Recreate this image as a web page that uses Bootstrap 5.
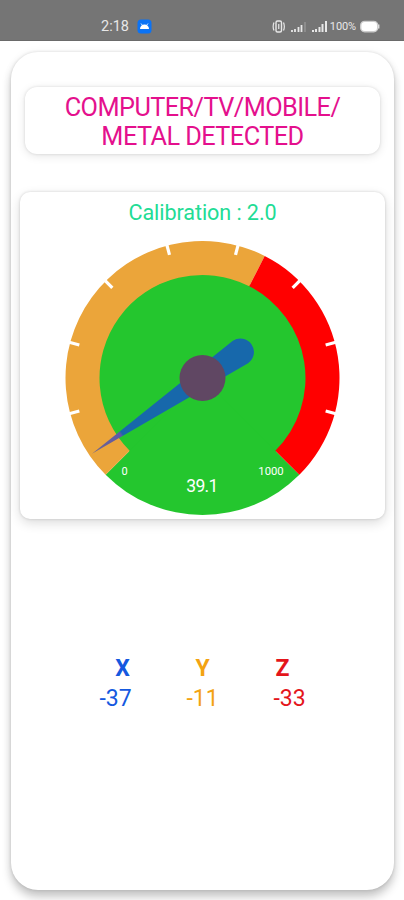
<!DOCTYPE html>
<html lang="en">
<head>
<meta charset="utf-8">
<meta name="viewport" content="width=device-width, initial-scale=1">
<title>Metal Detector</title>
<link href="https://cdn.jsdelivr.net/npm/bootstrap@5.3.0/dist/css/bootstrap.min.css" rel="stylesheet">
<style>
body{font-family:Roboto,"Liberation Sans",sans-serif;background:#fff;height:900px;overflow:hidden}
.status{height:41px;background:#757575;color:#e8e8e8;padding:12px 24px 0 101px;border-bottom:1px solid #6a6a6a}
.clock{font-size:14.5px;line-height:29px}
.pct{font-size:11px;line-height:29px;letter-spacing:-.1px}
.panel{height:838px;margin:11px 10px 0 11px;padding:35px 9px 0;border-radius:27px;box-shadow:0 0 3px rgba(0,0,0,.12),0 0 10px rgba(0,0,0,.05),0 7px 10px rgba(0,0,0,.22)}
.alert-box{height:67px;margin:0 5px;padding-top:2px;border-radius:12px;box-shadow:0 0 3px rgba(0,0,0,.12),0 2px 10px rgba(0,0,0,.1);color:#e4108d;font-size:25.3px;line-height:29px;letter-spacing:-.56px}
.gauge-box{height:327px;margin-top:38px;border-radius:10px;box-shadow:0 0 3px rgba(0,0,0,.16),0 4px 12px rgba(0,0,0,.14);color:#22dc95}
.calib{font-size:21.6px;line-height:26px;padding-top:8px;letter-spacing:-.08px}
.axes{margin-top:135px;font-size:23px;line-height:30px}
.axis{width:80px}
.vals .axis{width:87px}
.ax-x{color:#1559df}.ax-y{color:#f3a313}.ax-z{color:#e4151b}
</style>
</head>
<body>
<header class="status d-flex align-items-start">
  <span class="clock">2:18</span>
  <svg class="ms-2" width="15" height="29" viewBox="0 0 15 29"><rect x=".5" y="7.500" width="14" height="14" rx="3.500" fill="#0b73f5"/><path d="M3 17a4.500 4.500 0 0 1 9 0z" fill="#fff"/><path d="M4 11.500l1.500 2M11 11.500l-1.500 2" stroke="#fff" stroke-width=".8"/></svg>
  <div class="ms-auto d-flex">
    <svg width="58" height="29" viewBox="0 0 58 29" fill="none" stroke="#e8e8e8"><rect x="4" y="9" width="5.500" height="11" rx="1.500" stroke-width="1.400"/><path d="M2 10.500Q.3 14.500 2 18.500M11.500 10.500q1.700 4 0 8M6.750 12v5" stroke-width="1.200"/><path d="M20 20v-2M23 20v-3M26.500 20v-5M29.500 20v-7" stroke-width="1.800"/><path d="M33 20V10" stroke="#999" stroke-width="1.300"/><path d="M41 20v-2M44 20v-3M47.500 20v-5M50.500 20v-8M54 20V9" stroke-width="2"/></svg>
    <span class="pct">100%</span>
    <svg class="ms-1" width="20" height="29" viewBox="0 0 20 29"><rect x=".7" y="9.400" width="17" height="10.400" rx="4" fill="#fff" stroke="#ccc" stroke-width="1.400"/><path d="M18.700 12.500v4" stroke="#ddd" stroke-width="1.500"/></svg>
  </div>
</header>
<main class="panel bg-white">
  <section class="alert-box bg-white d-flex align-items-center justify-content-center text-center"><div>COMPUTER/TV/MOBILE/<br>METAL DETECTED</div></section>
  <section class="gauge-box bg-white text-center">
    <div class="calib">Calibration : 2.0</div>
    <svg class="d-block" width="365" height="290" viewBox="20 226 365 290">
      <defs><linearGradient id="needle" gradientUnits="userSpaceOnUse" x1="134" y1="0" x2="95" y2="0"><stop offset="0" stop-color="#756887"/><stop offset=".88" stop-color="#5c58aa"/><stop offset=".94" stop-color="#1768ab"/></linearGradient></defs>
      <g transform="translate(202.500 378)">
        <circle r="104" fill="#24c62e"/>
        <path d="M0 0L-96.870 96.870A137 137 0 0 0 96.870 96.870z" fill="#24c62e"/>
        <path d="M-96.870 96.870A137 137 0 0 1 62.200-122.070L46.760-91.770A103 103 0 0 0-72.830 72.830z" fill="#eba53a"/>
        <path d="M62.200-122.070A137 137 0 0 1 96.870 96.870L72.830 72.830A103 103 0 0 0 46.760-91.770z" fill="#f00"/>
        <g stroke="#fff" stroke-width="3.200">
          <path d="M0-138V-127.500" transform="rotate(15)"/><path d="M0-138V-127.500" transform="rotate(45)"/><path d="M0-138V-127.500" transform="rotate(75)"/><path d="M0-138V-127.500" transform="rotate(105)"/>
          <path d="M0-138V-127.500" transform="rotate(-15)"/><path d="M0-138V-127.500" transform="rotate(-45)"/><path d="M0-138V-127.500" transform="rotate(-75)"/><path d="M0-138V-127.500" transform="rotate(-105)"/>
        </g>
        <path d="M134 0L-46-13.500A13.500 13.500 0 1 0-46 13.500z" transform="rotate(145.600)" fill="url(#needle)"/>
        <circle r="23" fill="#604763"/>
      </g>
      <g fill="#fff" font-family="Roboto,sans-serif" text-anchor="middle"><text x="124.500" y="475" font-size="11">0</text><text x="271" y="475" font-size="11.300">1000</text><text x="202.300" y="492" font-size="17.500" textLength="32">39.1</text></g>
    </svg>
  </section>
  <section class="axes text-center">
    <div class="d-flex justify-content-center fw-bold"><div class="axis ax-x">X</div><div class="axis ax-y">Y</div><div class="axis ax-z">Z</div></div>
    <div class="vals d-flex justify-content-center"><div class="axis ax-x">-37</div><div class="axis ax-y">-11</div><div class="axis ax-z">-33</div></div>
  </section>
</main>
<script src="https://cdn.jsdelivr.net/npm/bootstrap@5.3.0/dist/js/bootstrap.bundle.min.js"></script>
</body>
</html>
